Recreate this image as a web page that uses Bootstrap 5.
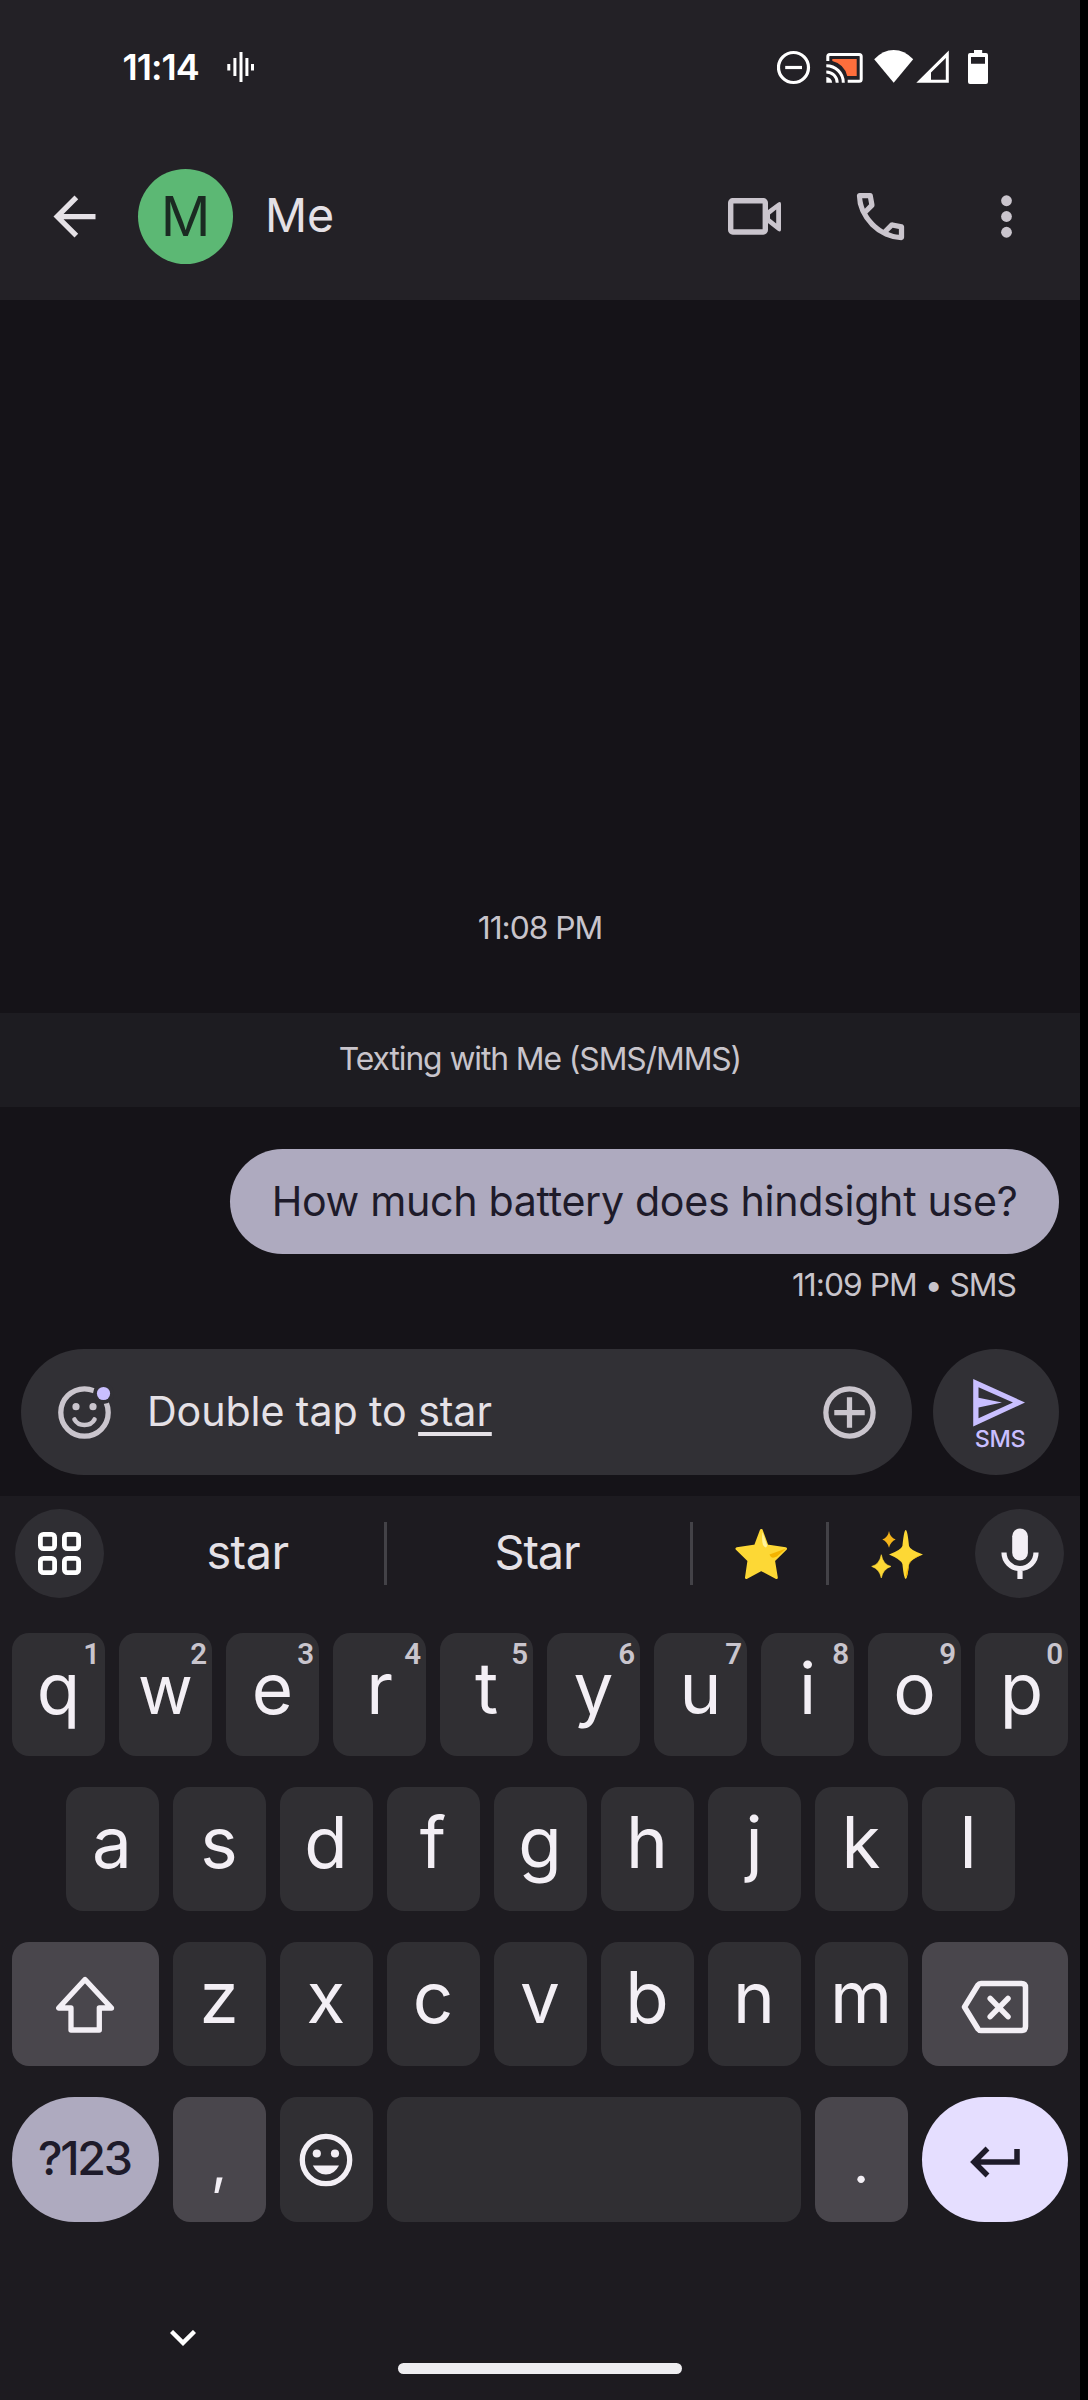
<!DOCTYPE html>
<html lang="en">
<head>
<meta charset="utf-8">
<meta name="viewport" content="width=device-width, initial-scale=1">
<title>Me</title>
<link href="https://cdn.jsdelivr.net/npm/bootstrap@5.3.0/dist/css/bootstrap.min.css" rel="stylesheet">
<style>
  body { background:#000; font-family:Inter, Roboto, "Liberation Sans", sans-serif; line-height:1; color:#e5e1e6; }
  svg { display:block; flex:none; }
  .phone { width:1080px; height:2400px; background:#151318; overflow:hidden; }
  .top-area { background:#232126; height:300px; }
  .status-bar { height:133px; padding:1px 91px 0 122.5px; color:#fff; }
  .clock { font-size:36px; font-weight:600; letter-spacing:-1px; margin-right:28px; }
  .app-bar { height:167px; padding:0 42px 0 42.5px; }
  .avatar { width:95px; height:95px; background:#5cb874; color:#1b2a22; font-size:55px; margin-left:32.5px; }
  .contact { font-size:46.6px; margin-left:32px; padding-bottom:2px; }
  .actions { gap:63px; color:#cac5cd; }
  .thread { height:1049px; color:#c8c4cb; font-size:31.8px; }
  .stamp { height:40px; line-height:40px; margin-bottom:65px; letter-spacing:-1.05px; }
  .banner { height:94px; background:#1d1c21; letter-spacing:-1.08px; padding-bottom:2px; }
  .bubble { width:829px; height:105px; border-radius:52.5px; background:#aeaabf; color:#1e1b2a; font-size:41.2px; letter-spacing:-.33px; margin:42px 21px 11px 0; white-space:nowrap; }
  .meta { height:40px; line-height:40px; margin:0 64px 44px 0; letter-spacing:-1px; }
  .composer { height:147px; padding:0 21px 21px; gap:21px; }
  .field { height:126px; background:#313035; padding:0 31px 0 32px; font-size:41.2px; letter-spacing:-.1px; }
  .field-text { margin-left:31px; white-space:nowrap; }
  .pending { text-decoration:underline; text-decoration-thickness:4px; text-underline-offset:6px; text-decoration-skip-ink:none; }
  .send { width:126px; background:#313035; color:#c9bfff; padding:30px 0 0 6px; }
  .send-label { font-size:23.4px; font-weight:500; line-height:24px; letter-spacing:-.3px; padding-left:2px; }
  .keyboard { background:#1d1b20; height:904px; }
  .strip { height:115px; padding:0 16px 0 15px; }
  .round-btn { width:89px; height:89px; background:#2f2e33; color:#f3eff5; }
  .word { font-size:46.8px; padding-bottom:2px; letter-spacing:-.5px; }
  .rule { width:3px; height:63px; background:#434247; }
  .keys { padding:22px 12px 0; gap:31px; }
  .key-row { gap:14px; height:124px; }
  .key-row.first { height:123px; }
  .key-row.last { height:125px; }
  .key { width:93px; border-radius:17px; background:#302f33; color:#f3eff5; font-size:71px; padding-bottom:13px; display:flex; align-items:center; justify-content:center; position:relative; }
  .key.wide { width:146.5px; }
  .key.space { width:414px; }
  .key.tone { background:#49464c; }
  .key.glyph { padding-bottom:0; }
  .key.low { padding-top:5px; }
  .key.punct { font-size:56px; padding:7px 0 0; }
  .key.broad { font-size:67px; padding-bottom:10px; }
  .key.oval { border-radius:62.5px; }
  .key.symbols { background:#aeaabf; color:#1e1b2a; font-size:46.6px; font-weight:500; letter-spacing:-2.3px; padding:0 2px 3px 0; }
  .key.enter { background:#e5deff; color:#1e1b2a; }
  .hint { position:absolute; top:7px; right:5px; font-family:Roboto, Inter, sans-serif; font-size:29.5px; line-height:29px; font-weight:600; color:#c9c5cd; }
  .chevron { margin:108px 0 17px 170px; }
  .pill { width:284px; height:11px; background:#eeedf0; }
</style>
<script src="https://cdn.jsdelivr.net/npm/bootstrap@5.3.0/dist/js/bootstrap.bundle.min.js"></script>
</head>
<body>
<div class="phone d-flex flex-column">
  <header class="top-area">
    <div class="status-bar d-flex align-items-center">
      <span class="clock">11:14</span>
      <svg width="27" height="32" viewBox="227 52 27 32" stroke="#fff" stroke-width="3"><path d="M228.8 65v6.400M234.900 59v18M241 53v30M246.900 59v18M252.500 65v6.400"/></svg>
      <div class="d-flex ms-auto">
        <svg width="34" height="36" viewBox="777 49 34 36" fill="none" stroke="#fff" stroke-width="3.200"><circle cx="793.500" cy="67.500" r="15"/><path d="M785.200 67.500h16.800"/></svg>
        <svg style="margin-left:15px" width="37" height="36" viewBox="826 49 37 36"><path d="M832.300 59h24.400v17h-9.500A20.500 20.500 0 0 0 832.300 61z" fill="#ff6e3c"/><g fill="none" stroke="#fff" stroke-width="3"><path d="M827.800 61v-4.500q0-2 2-2h29.400q2 0 2 2v22.800q0 2-2 2h-11.500M826.300 65.700A17 17 0 0 1 843.300 82.700M826.300 71.900A10.900 10.900 0 0 1 837.200 82.700"/></g><path d="M826.300 77a5.800 5.800 0 0 1 5.800 5.700h-5.800z" fill="#fff"/></svg>
        <svg style="margin-left:11px" width="40" height="36" viewBox="874 49 40 36" fill="#fff"><path d="M893.700 82.800 874.200 59.200Q883 50 893.700 50T913.200 59.200z"/></svg>
        <svg style="margin-left:1px" width="35" height="36" viewBox="915 49 35 36" fill="#fff"><path fill-rule="evenodd" d="M916.300 82.800 948.800 50.500V82.800zM931 79.800H945.800V58L931 72.500z"/></svg>
        <svg style="margin-left:17px" width="22" height="36" viewBox="967 49 22 36" fill="#fff"><path fill-rule="evenodd" d="M974 50h8.200v3h3.800q2 0 2 2v27q0 2-2 2h-16q-2 0-2-2v-27q0-2 2-2h4zM971 57v6.700h14V57z"/></svg>
      </div>
    </div>
    <div class="app-bar d-flex align-items-center">
      <svg width="63" height="63" viewBox="0 0 24 24" fill="#e5e1e6"><path d="M20 11H7.830l5.590-5.590L12 4l-8 8 8 8 1.410-1.410L7.830 13H20v-2z"/></svg>
      <div class="avatar rounded-circle d-flex align-items-center justify-content-center">M</div>
      <div class="contact">Me</div>
      <div class="actions d-flex ms-auto">
        <svg width="63" height="63" viewBox="723 185 63 63"><rect x="730.700" y="200.700" width="34.600" height="31.300" rx="2" fill="none" stroke="currentColor" stroke-width="5.400"/><path fill="currentColor" fill-rule="evenodd" d="M766 211.500 777.500 203Q781 200.500 781 204V229.500Q781 233 777.500 230.500L766 221.500zM770 214.500V218.500L776.200 223.500V209.500z"/></svg>
        <svg width="63" height="63" viewBox="0 -960 960 960" fill="currentColor"><path d="M798-120q-125 0-247-54.500T329-329Q229-429 174.500-551T120-798q0-18 12-30t30-12h162q14 0 25 9.500t13 22.500l26 140q2 16-1 27t-11 19l-97 98q20 37 47.500 71.500T387-386q31 31 65 57.500t72 48.500l94-94q9-9 23.500-13.500T670-390l138 28q14 4 23 14.500t9 23.500v162q0 18-12 30t-30 12ZM241-600l66-66-17-94h-89q5 41 14 81t26 79Zm358 358q39 17 79.500 27t81.500 13v-88l-94-19-67 67Z"/></svg>
        <svg width="63" height="63" viewBox="0 0 24 24" fill="currentColor"><circle cx="12" cy="6" r="2.050"/><circle cx="12" cy="12" r="2.050"/><circle cx="12" cy="18" r="2.050"/></svg>
      </div>
    </div>
  </header>

  <main class="thread d-flex flex-column justify-content-end">
    <div class="stamp text-center">11:08 PM</div>
    <div class="banner d-flex align-items-center justify-content-center">Texting with Me (SMS/MMS)</div>
    <div class="bubble align-self-end d-flex align-items-center justify-content-center">How much battery does hindsight use?</div>
    <div class="meta text-end">11:09 PM • SMS</div>
  </main>

  <div class="composer d-flex">
    <div class="field rounded-pill flex-grow-1 d-flex align-items-center">
      <svg width="63" height="63" viewBox="53 1381 63 63"><circle cx="84.500" cy="1412.500" r="23.700" fill="none" stroke="#cac5cd" stroke-width="5.300"/><circle cx="76" cy="1406.700" r="3.600" fill="#cac5cd"/><circle cx="93" cy="1406.700" r="3.600" fill="#cac5cd"/><path d="M74.500 1419.500Q77.500 1425 84.500 1425T94.500 1419.500" fill="none" stroke="#cac5cd" stroke-width="4.600" stroke-linecap="round"/><circle cx="103.500" cy="1393.500" r="10.500" fill="#313035"/><circle cx="103.500" cy="1393.500" r="6.600" fill="#c9bfff"/></svg>
      <div class="field-text">Double tap to <span class="pending">star</span></div>
      <svg class="ms-auto" width="63" height="63" viewBox="0 0 24 24" fill="none" stroke="#cac5cd" stroke-width="2"><circle cx="12" cy="12" r="9"/><path d="M12 6.200v11.600M6.200 12h11.600"/></svg>
    </div>
    <div class="send rounded-circle d-flex flex-column align-items-center">
      <svg width="52" height="48" viewBox="973 1379 52 48"><path fill="currentColor" fill-rule="evenodd" d="M973.200 1379 1025 1402.500 973.200 1426.500zM978.500 1387.200V1397.700L1002 1402.500 978.500 1407.500V1418.200L1013 1402.500z"/></svg>
      <span class="send-label">SMS</span>
    </div>
  </div>

  <section class="keyboard">
    <div class="strip d-flex align-items-center">
      <div class="round-btn rounded-circle d-flex align-items-center justify-content-center">
        <svg width="43" height="43" viewBox="0 0 43 43" fill="none" stroke="#fff" stroke-width="4.800"><rect x="2.400" y="2.400" width="14.200" height="14.200" rx="3"/><rect x="26.400" y="2.400" width="14.200" height="14.200" rx="3"/><rect x="2.400" y="26.400" width="14.200" height="14.200" rx="3"/><rect x="26.400" y="26.400" width="14.200" height="14.200" rx="3"/></svg>
      </div>
      <div class="word text-center" style="width:280px;padding-left:7px">star</div>
      <div class="rule"></div>
      <div class="word text-center" style="width:303px;padding-right:3px;letter-spacing:-1.100px">Star</div>
      <div class="rule"></div>
      <div class="d-flex justify-content-center" style="width:133px;padding-left:3px">
        <svg width="54" height="52" viewBox="734 1528 54 52"><path d="M761.300 1530.500 767 1546 785.500 1548.700 773.500 1560.500 776.300 1577.500 761.300 1569.500 746.500 1577.500 749 1560.500 737 1548.700 755.500 1546z" fill="#fdd835" stroke="#fdd835" stroke-width="3" stroke-linejoin="round"/><path d="M762.500 1532Q761.500 1541 763 1545 766 1549.500 767.200 1545.500z" fill="#fff59d"/><path d="M786 1548.500 769.500 1554.500Q771 1559.500 777 1556.500z" fill="#f4b400"/></svg>
      </div>
      <div class="rule"></div>
      <div class="d-flex justify-content-center" style="width:136px">
        <svg width="54" height="52" viewBox="870 1528 54 52"><path d="M905.700 1530Q907.500 1530 909 1546 910 1550 923 1554.500 910.500 1559.500 909 1564 907.500 1579 905.700 1579T902.400 1564Q901 1559.500 889 1554.500 901 1550 902.400 1546 904 1530 905.700 1530z" fill="#fdd835"/><path d="M921 1555 Q908 1558 905.700 1577 907.500 1578 909 1564 910.500 1559.500 921 1555z" fill="#f4b400"/><path d="M889 1531Q890 1537.500 895.700 1539.400 890.500 1541.500 889 1547.700 887.500 1541.500 882.300 1539.400 888 1537.500 889 1531z" fill="#f4b41a"/><path d="M881.300 1554.700Q883 1564.500 891 1566.400 883 1569 881.300 1578 879.500 1569 871.700 1566.400 879.500 1564.500 881.300 1554.700z" fill="#fdd835" stroke="#fdd835" stroke-width=".6"/></svg>
      </div>
      <div class="round-btn rounded-circle d-flex align-items-center justify-content-center ms-auto">
        <svg width="38" height="52" viewBox="1000.500 1526.500 38 52"><rect x="1011.700" y="1527" width="15.700" height="32" rx="7.850" fill="currentColor"/><path d="M1003.500 1551a16 16 0 0 0 32 0M1019.500 1567v10.500" fill="none" stroke="currentColor" stroke-width="5.200"/></svg>
      </div>
    </div>

    <div class="keys d-flex flex-column">
      <div class="key-row first d-flex">
        <div class="key">q<span class="hint">1</span></div><div class="key broad">w<span class="hint">2</span></div><div class="key">e<span class="hint">3</span></div><div class="key">r<span class="hint">4</span></div><div class="key">t<span class="hint">5</span></div><div class="key">y<span class="hint">6</span></div><div class="key">u<span class="hint">7</span></div><div class="key">i<span class="hint">8</span></div><div class="key">o<span class="hint">9</span></div><div class="key">p<span class="hint">0</span></div>
      </div>
      <div class="key-row d-flex justify-content-center">
        <div class="key">a</div><div class="key">s</div><div class="key">d</div><div class="key">f</div><div class="key">g</div><div class="key">h</div><div class="key">j</div><div class="key">k</div><div class="key">l</div>
      </div>
      <div class="key-row d-flex">
        <div class="key wide tone glyph"><svg width="60" height="60" viewBox="55 1973.500 60 60" fill="none" stroke="currentColor" stroke-width="5.300" stroke-linejoin="round"><path d="M85 1979 58.700 2007.500H71V2029.500H99.300V2007.500H111.500z"/></svg></div>
        <div class="key">z</div><div class="key">x</div><div class="key">c</div><div class="key">v</div><div class="key">b</div><div class="key">n</div><div class="key">m</div>
        <div class="key wide tone glyph low"><svg width="68" height="54" viewBox="959.500 1979.500 68 54" fill="none" stroke="currentColor" stroke-width="5.500" stroke-linejoin="round" stroke-linecap="round"><path d="M963 2006.500 976.500 1984.500Q977.500 1983 979.500 1983H1020Q1024 1983 1024 1987V2026Q1024 2030 1020 2030H979.500Q977.500 2030 976.500 2028.500zM988.700 1998 1006.500 2016.200M1006.500 1998 988.700 2016.200"/></svg></div>
      </div>
      <div class="key-row last d-flex">
        <div class="key wide oval symbols">?123</div>
        <div class="key tone punct">,</div>
        <div class="key glyph"><svg width="54" height="54" viewBox="298.500 2132.500 54 54"><circle cx="325.500" cy="2159.500" r="23.700" fill="none" stroke="currentColor" stroke-width="5.300"/><circle cx="316.300" cy="2153" r="4.100" fill="currentColor"/><circle cx="334.500" cy="2153" r="4.100" fill="currentColor"/><path d="M312.300 2165H338.500Q334 2174 325.400 2174T312.300 2165z" fill="currentColor"/></svg></div>
        <div class="key space"></div>
        <div class="key tone punct">.</div>
        <div class="key wide oval glyph low enter"><svg width="52" height="34" viewBox="967.500 2145 52 34" fill="none" stroke="currentColor" stroke-width="5.500"><path d="M1015.500 2149V2162H973M986 2148.500 972.500 2162 986 2175.500"/></svg></div>
      </div>
    </div>
    <svg class="chevron" width="26" height="16" viewBox="0 0 26 16" fill="none" stroke="#fff" stroke-width="4.400"><path d="M1.500 1.500 13 12.800 24.500 1.500"/></svg>
    <div class="pill rounded-pill mx-auto"></div>
  </section>
</div>
</body>
</html>
